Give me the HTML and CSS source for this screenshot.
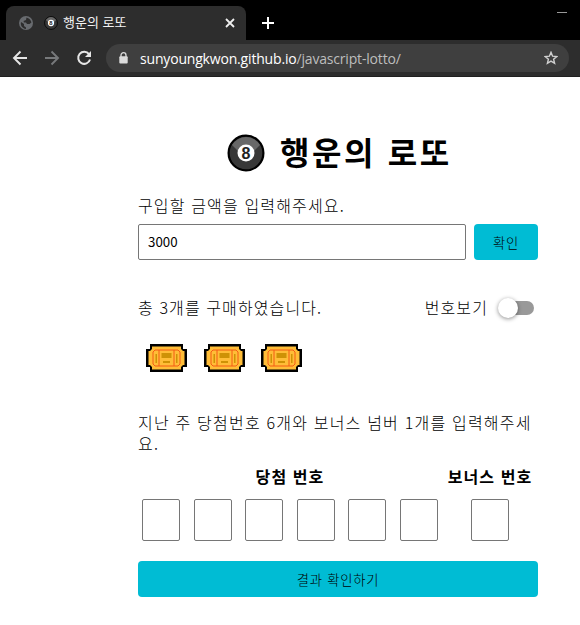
FILE: index.html
```html
<!DOCTYPE html>
<html lang="ko">
<head>
<meta charset="utf-8">
<title>🎱 행운의 로또</title>
<link rel="stylesheet" href="styles.css">
</head>
<body>
<svg width="0" height="0" class="defs">
  <symbol id="ball" viewBox="0 0 38 38">
    <circle cx="19" cy="19" r="17.4" fill="#383838" stroke="#000" stroke-width="2.2"/>
    <path d="M5 11A16.3 16.3 0 0 1 33 11L22 22H16Z" fill="#686868"/>
    <circle cx="19" cy="19" r="8.5" fill="#fff"/>
  </symbol>
  <symbol id="ticket" viewBox="0 0 41 28">
    <path d="M4 0H37V5H41V23H37V28H4V23H0V5H4Z" fill="#000"/>
    <path d="M6 2.500H35V5L37 7H38.500V21H37L35 23V25.500H6V23L4 21H2.500V7H4L6 5Z" fill="#ffbd37"/>
    <path d="M9 6H32L34 8V20L32 22H9L7 20V8ZM13 6V22M28 6V22" fill="none" stroke="#f45b16" stroke-width="1"/>
    <path d="M15.500 9H25.500V14H15.500ZM17 17H24V19H17ZM9.500 10H11V19H9.500ZM30 10H31.500V19H30Z" fill="#ce9206"/>
  </symbol>
</svg>
<header class="browser">
  <div class="tabs">
    <div class="tab">
      <svg class="globe" viewBox="0 0 14 14"><circle cx="7" cy="7" r="7" fill="#686b6f"/><path d="M2 6L5 8V10L7 11.500V13C3 12.500 1.200 9 2 6ZM7.500 1.500C10 2 12 4 12.400 6.500L10.500 8H8L7 6.500H5L4.500 5L7 4Z" fill="#2d2d2d"/></svg>
      <svg class="tab-ball" viewBox="0 0 38 38"><use href="#ball"/><text x="19" y="24.7" text-anchor="middle" class="eight">8</text></svg>
      <span class="tab-title">행운의 로또</span>
      <svg class="close" viewBox="0 0 10 10"><path d="M1 1L9 9M9 1L1 9" stroke="#eee" stroke-width="1.8"/></svg>
    </div>
    <svg class="plus" viewBox="0 0 12 12"><path d="M6 0V12M0 6H12" stroke="#fff" stroke-width="2"/></svg>
    <span class="minimize"></span>
  </div>
  <div class="toolbar">
    <svg class="nav" viewBox="0 0 16 16"><path d="M15 8H2.500M8.500 1.500L2 8L8.500 14.500" fill="none" stroke="#e6e6e6" stroke-width="1.900"/></svg>
    <svg class="nav" viewBox="0 0 16 16"><path d="M1 8H13.500M7.500 1.500L14 8L7.500 14.500" fill="none" stroke="#77797b" stroke-width="1.900"/></svg>
    <svg class="nav" viewBox="0 0 16 16"><path d="M13 4.200A6 6 0 1 0 14 9.500" fill="none" stroke="#e6e6e6" stroke-width="2"/><path d="M15 1V7H9Z" fill="#e6e6e6"/></svg>
    <div class="address">
      <svg class="lock" viewBox="0 0 9 12"><path d="M2 5V3.200a2.500 2.500 0 0 1 5 0V5" fill="none" stroke="#dcdcdc" stroke-width="1.300"/><rect x=".3" y="4.200" width="8.400" height="7.300" rx="1" fill="#dcdcdc"/></svg>
      <span class="url"><b>sunyoungkwon.github.io</b>/javascript-lotto/</span>
      <svg class="star" viewBox="0 0 14 14"><path d="M7 1.300L8.600 5.200L12.800 5.500L9.600 8.200L10.600 12.300L7 10.100L3.400 12.300L4.400 8.200L1.200 5.500L5.400 5.200Z" fill="none" stroke="#d0d0d0" stroke-width="1.400"/></svg>
    </div>
  </div>
</header>
<main class="app">
  <h1 class="title"><svg class="title-ball" viewBox="0 0 38 38"><use href="#ball"/><text x="19" y="24.700" text-anchor="middle" class="eight">8</text></svg><span>행운의 로또</span></h1>
  <label class="label" for="money">구입할 금액을 입력해주세요.</label>
  <form class="purchase">
    <input id="money" class="money" type="text" value="3000">
    <button class="button submit" type="button">확인</button>
  </form>
  <div class="summary">
    <span class="count">총 3개를 구매하였습니다.</span>
    <span class="toggle-label">번호보기</span>
    <span class="switch"><span class="knob"></span></span>
  </div>
  <div class="tickets">
    <svg class="ticket"><use href="#ticket"/></svg>
    <svg class="ticket"><use href="#ticket"/></svg>
    <svg class="ticket"><use href="#ticket"/></svg>
  </div>
  <p class="guide">지난 주 당첨번호 6개와 보너스 넘버 1개를 입력해주세<br>요.</p>
  <div class="numbers">
    <section class="winning">
      <h2>당첨 번호</h2>
      <div class="boxes"><input class="box"><input class="box"><input class="box"><input class="box"><input class="box"><input class="box"></div>
    </section>
    <section class="bonus">
      <h2>보너스 번호</h2>
      <div class="boxes"><input class="box"></div>
    </section>
  </div>
  <button class="button result" type="button">결과 확인하기</button>
</main>
</body>
</html>
```
FILE: styles.css
```css
* { box-sizing: border-box; }
body {
  margin: 0;
  height: 625px;
  overflow: hidden;
  background: #fff;
  color: #000;
  font-family: "Noto Sans CJK KR", sans-serif;
  font-size: 16px;
}
svg { display: block; flex: none; }
.defs { position: absolute; }
.eight { font: bold 16px "Liberation Sans", sans-serif; letter-spacing: 0; fill: #222; }
.browser { height: 77px; background: #2d2d2d; border-bottom: 1px solid #202020; }
.tabs { display: flex; height: 40px; background: #000; padding: 6px 13px 0 6px; }
.tab {
  display: flex;
  align-items: center;
  width: 240px;
  height: 34px;
  padding: 0 11px 0 13px;
  border-radius: 8px 8px 0 0;
  background: #2d2d2d;
  color: #f3f3f3;
}
.globe { width: 14px; height: 14px; }
.tab-ball { width: 14px; height: 14px; margin-left: 11px; }
.tab-title { margin: -2px 0 0 5px; font-size: 13px; line-height: 20px; white-space: nowrap; }
.close { width: 10px; height: 10px; margin-left: auto; }
.plus { width: 12px; height: 12px; margin: 11px 0 0 16px; }
.minimize { width: 10px; height: 1px; margin: 6px 0 0 auto; background: #999; }
.toolbar { display: flex; align-items: center; height: 36px; padding: 0 11px 0 12px; }
.nav { width: 16px; height: 16px; margin-right: 16px; }
.nav:nth-child(3) { margin-right: 14px; }
.address {
  display: flex;
  align-items: center;
  flex: 1;
  height: 28px;
  padding: 0 11px 0 13px;
  border-radius: 14px;
  background: #3f3f3f;
}
.lock { width: 9px; height: 12px; }
.url { margin-left: 12px; color: #bdbdbd; font: 14px "Open Sans", sans-serif; letter-spacing: -.18px; white-space: nowrap; }
.url b { color: #fff; font-weight: 400; }
.star { width: 14px; height: 14px; margin-left: auto; }
.app { width: 400px; margin: 0 0 0 138px; padding-top: 52px; font-weight: 300; }
.title {
  display: flex;
  align-items: center;
  height: 47px;
  margin: 0;
  padding-left: 89px;
  font-size: 32px;
  font-weight: 700;
  line-height: 47px;
  letter-spacing: 2.6px;
  white-space: nowrap;
}
.title span { margin-top: -2px; }
.title-ball { width: 38px; height: 38px; margin-right: 15px; }
.label { display: block; height: 21px; margin-top: 19px; line-height: 20px; letter-spacing: 1.15px; }
.purchase { display: flex; gap: 8px; height: 36px; margin-top: 8px; }
.money {
  width: 328px;
  padding: 0 9px 2px;
  border: 1px solid #767676;
  border-radius: 2px;
  font: 13.3px "Noto Sans CJK KR", sans-serif;
  color: #000;
}
.button {
  padding: 0;
  border: 0;
  border-radius: 4px;
  background: #00bcd4;
  color: #000;
  font: 300 13.3px "Noto Sans CJK KR", sans-serif;
  letter-spacing: .8px;
}
.submit { width: 64px; }
.summary { display: flex; align-items: center; height: 24px; margin-top: 35px; letter-spacing: 1.1px; line-height: 24px; }
.toggle-label { margin-left: auto; }
.switch { display: flex; align-items: center; width: 36px; height: 14px; margin: 1px 4px 0 10px; border-radius: 7px; background: linear-gradient(90deg, transparent 10px, #999 10px); }
.knob { width: 20px; height: 20px; border-radius: 50%; background: #fff; box-shadow: 0 1px 4px rgba(0, 0, 0, .45); }
.tickets { display: flex; gap: 16.5px; height: 28px; margin-top: 25px; padding-left: 8px; }
.ticket { width: 41px; height: 28px; }
.guide { height: 42px; margin: 40px 0 0; line-height: 21px; letter-spacing: 1.2px; white-space: nowrap; }
.numbers { display: flex; justify-content: space-between; margin-top: 12px; }
.winning { width: 304px; }
.bonus { width: 96px; }
.numbers h2 { height: 21px; margin: 0; text-align: center; font-size: 16px; font-weight: 700; line-height: 21px; letter-spacing: 1.1px; white-space: nowrap; }
.boxes { display: flex; justify-content: space-between; height: 42px; margin-top: 12px; padding: 0 4px; }
.bonus .boxes { justify-content: center; }
.winning .boxes { padding-right: 4px; }
.box { width: 38px; height: 42px; padding: 0; border: 1px solid #767676; border-radius: 2px; }
.result { display: block; width: 400px; height: 36px; margin-top: 20px; }
```
